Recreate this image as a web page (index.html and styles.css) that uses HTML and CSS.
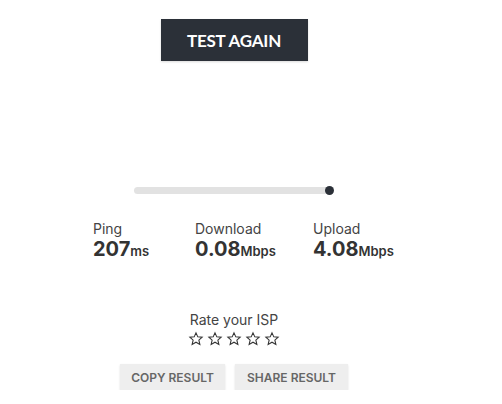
FILE: index.html
```html
<!DOCTYPE html>
<html>
<head>
<meta charset="utf-8">
<link rel="stylesheet" href="styles.css">
</head>
<body>
<main class="page">
  <button class="btn-primary">TEST AGAIN</button>
  <div class="slider"><div class="track"></div><div class="knob"></div></div>
  <div class="stats">
    <div class="stat stat-ping">
      <div class="label">Ping</div>
      <div class="value">207<span class="unit">ms</span></div>
    </div>
    <div class="stat stat-down">
      <div class="label">Download</div>
      <div class="value">0.08<span class="unit">Mbps</span></div>
    </div>
    <div class="stat stat-up">
      <div class="label">Upload</div>
      <div class="value">4.08<span class="unit">Mbps</span></div>
    </div>
  </div>
  <div class="rate">
    <div class="rate-title">Rate your ISP</div>
    <div class="stars">
      <svg class="star" viewBox="0 0 24 24"><path d="M12 2.8l2.7 6 6.5.6-4.9 4.3 1.5 6.4L12 16.8l-5.8 3.3 1.5-6.4-4.9-4.3 6.5-.6z"/></svg>
      <svg class="star" viewBox="0 0 24 24"><path d="M12 2.8l2.7 6 6.5.6-4.9 4.3 1.5 6.4L12 16.8l-5.8 3.3 1.5-6.4-4.9-4.3 6.5-.6z"/></svg>
      <svg class="star" viewBox="0 0 24 24"><path d="M12 2.8l2.7 6 6.5.6-4.9 4.3 1.5 6.4L12 16.8l-5.8 3.3 1.5-6.4-4.9-4.3 6.5-.6z"/></svg>
      <svg class="star" viewBox="0 0 24 24"><path d="M12 2.8l2.7 6 6.5.6-4.9 4.3 1.5 6.4L12 16.8l-5.8 3.3 1.5-6.4-4.9-4.3 6.5-.6z"/></svg>
      <svg class="star" viewBox="0 0 24 24"><path d="M12 2.8l2.7 6 6.5.6-4.9 4.3 1.5 6.4L12 16.8l-5.8 3.3 1.5-6.4-4.9-4.3 6.5-.6z"/></svg>
    </div>
  </div>
  <div class="actions">
    <button class="btn-light btn-copy">COPY RESULT</button>
    <button class="btn-light btn-share">SHARE RESULT</button>
  </div>
</main>
</body>
</html>
```

FILE: styles.css
```css
html, body {
  margin: 0;
  padding: 0;
  background: #ffffff;
}
body {
  font-family: "Inter", "Noto Sans", sans-serif;
  color: #333333;
}
.page {
  width: 468px;
  display: flex;
  flex-direction: column;
  align-items: center;
  padding-top: 19px;
}
.btn-primary {
  width: 147px;
  height: 42px;
  border: none;
  background: #2b3038;
  color: #ffffff;
  font-family: "Lato", sans-serif;
  font-weight: 700;
  font-size: 17px;
  letter-spacing: -0.2px;
  padding: 0;
  box-shadow: 0 1px 2px rgba(0,0,0,0.15);
}
.slider {
  margin-top: 125px;
  width: 200px;
  height: 9px;
  display: flex;
  align-items: center;
  position: relative;
}
.track {
  width: 196px;
  height: 7px;
  border-radius: 4px;
  background: #e2e2e2;
}
.knob {
  position: absolute;
  right: 0;
  top: 0;
  width: 9px;
  height: 9px;
  border-radius: 50%;
  background: #2b3038;
}
.stats {
  margin-top: 25px;
  display: flex;
  margin-left: 28px;
}
.stat-ping { width: 102px; }
.stat-down { width: 118px; }
.stat-up { width: 90px; }
.label {
  font-size: 14px;
  color: #444;
  line-height: 17px;
}
.value {
  margin-top: 1px;
  font-size: 20px;
  font-weight: 700;
  color: #333;
  letter-spacing: 0;
  line-height: 23px;
}
.unit {
  font-size: 13px;
  font-weight: 600;
  letter-spacing: 0;
}
.rate {
  margin-top: 48px;
  display: flex;
  flex-direction: column;
  align-items: center;
}
.rate-title {
  font-size: 14px;
  color: #444;
  line-height: 17px;
}
.stars {
  margin-top: 3px;
  display: flex;
  gap: 3px;
}
.star {
  width: 16px;
  height: 16px;
  fill: none;
  stroke: #333;
  stroke-width: 1.6;
  stroke-linejoin: miter;
}
.actions {
  margin-top: 17px;
  display: flex;
  gap: 10px;
}
.btn-light {
  height: 26px;
  border: none;
  background: #eeeeee;
  color: #666666;
  font-family: "Inter", "Noto Sans", sans-serif;
  font-weight: 600;
  font-size: 12px;
  padding: 0 10px;
  box-shadow: 0 1px 2px rgba(0,0,0,0.12);
}
.btn-copy { width: 105px; }
.btn-share { width: 113px; }
```
